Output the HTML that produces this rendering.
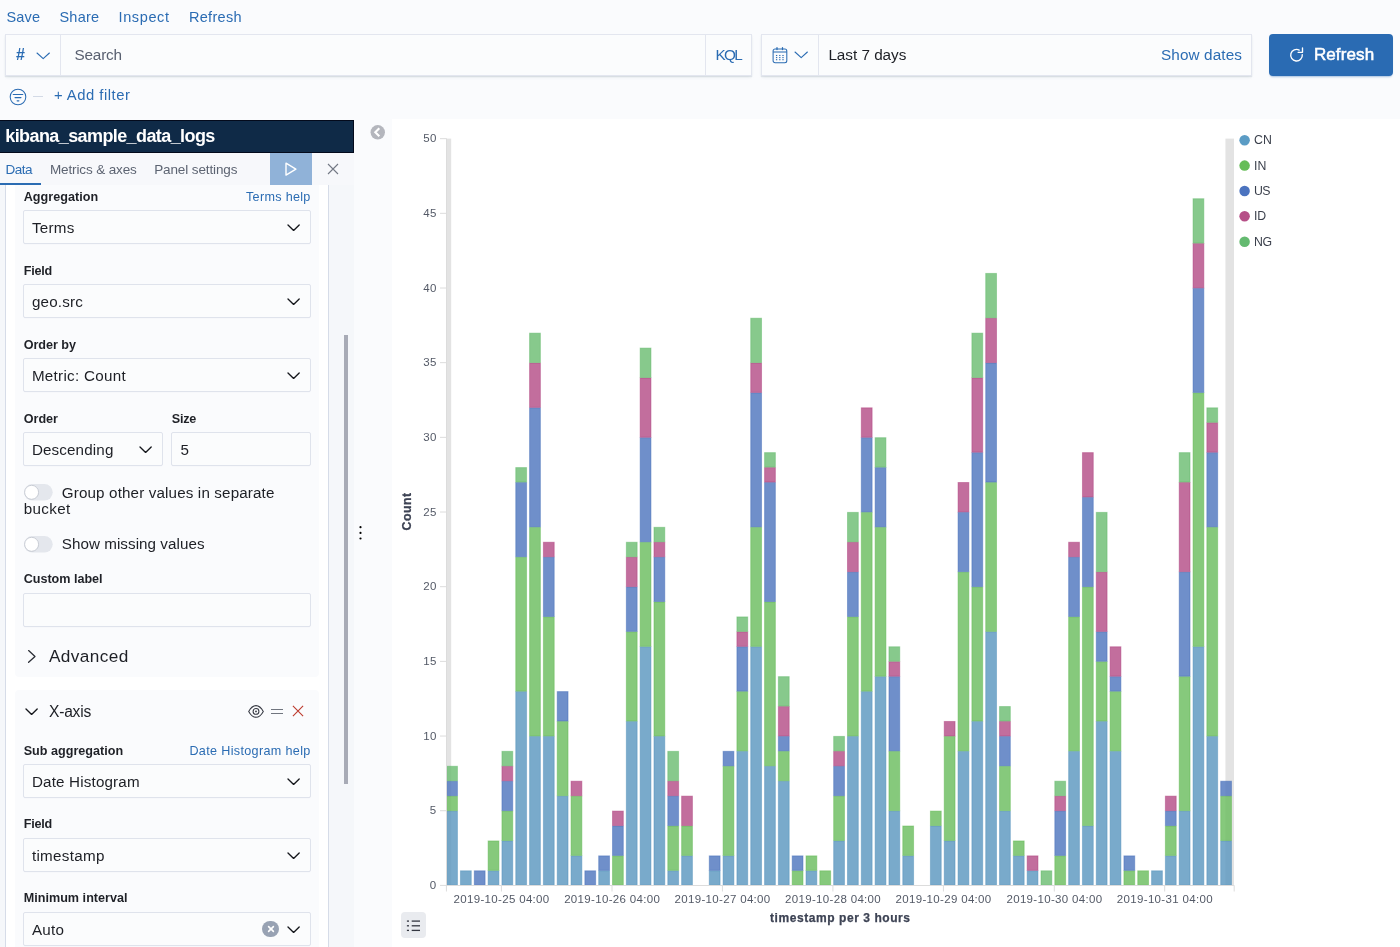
<!DOCTYPE html>
<html lang="en"><head><meta charset="utf-8"><title>Visualize - Kibana</title>
<style>
html,body{margin:0;padding:0}
body{width:1400px;height:947px;overflow:hidden;position:relative;background:#fafbfd;font-family:"Liberation Sans",sans-serif;}
.b{position:absolute;display:block}
.bb{box-sizing:border-box}
.t{position:absolute;white-space:nowrap;line-height:normal}
</style></head><body>
<div id="app" style="position:absolute;left:0;top:0;width:1400px;height:947px;will-change:transform">
<span class="t" style="left:6.50px;top:9.00px;font-size:14.5px;color:#2b6cb3;letter-spacing:0.150px;">Save</span>
<span class="t" style="left:59.50px;top:9.00px;font-size:14.5px;color:#2b6cb3;letter-spacing:0.202px;">Share</span>
<span class="t" style="left:118.50px;top:9.00px;font-size:14.5px;color:#2b6cb3;letter-spacing:0.625px;">Inspect</span>
<span class="t" style="left:189.00px;top:9.00px;font-size:14.5px;color:#2b6cb3;letter-spacing:0.288px;">Refresh</span>
<div class="b bb" style="left:5px;top:34px;width:747.4px;height:41.5px;background:#fbfcfd;border:1px solid #e3e6ef;box-shadow:0 1px 1px rgba(152,162,179,.22),0 2px 3px -1px rgba(152,162,179,.22);"></div>
<div class="b " style="left:60px;top:35px;width:1px;height:39.5px;background:#e3e6ef;"></div>
<div class="b " style="left:705px;top:35px;width:1px;height:39.5px;background:#e3e6ef;"></div>
<span class="t" style="left:15.90px;top:46.00px;font-size:16px;color:#2b6cb3;letter-spacing:0.000px;font-weight:700;">#</span>
<svg class="b" style="left:35.199999999999996px;top:50.55px;" width="16.4" height="9.7" viewBox="0 0 16.4 9.7"><path d="M2 2 L8.20 7.70 L14.40 2" fill="none" stroke="#2b6cb3" stroke-width="1.1" stroke-linecap="round" stroke-linejoin="round"/></svg>
<span class="t" style="left:74.50px;top:46.00px;font-size:15.3px;color:#596070;letter-spacing:-0.175px;">Search</span>
<span class="t" style="left:715.50px;top:46.00px;font-size:15.3px;color:#2b6cb3;letter-spacing:-1.707px;">KQL</span>
<div class="b bb" style="left:761px;top:34px;width:491px;height:41.5px;background:#fbfcfd;border:1px solid #e3e6ef;box-shadow:0 1px 1px rgba(152,162,179,.22),0 2px 3px -1px rgba(152,162,179,.22);"></div>
<div class="b " style="left:818px;top:35px;width:1px;height:39.5px;background:#e3e6ef;"></div>
<svg class="b" style="left:772px;top:47px;" width="16" height="17" viewBox="0 0 16 17"><g fill="none" stroke="#2b6cb3" stroke-width="1.05"><rect x="1.1" y="2" width="13.7" height="13.8" rx="2"/><path d="M1.1 5H14.8"/><path d="M5 0.7V2.6M10.5 0.7V2.6" stroke-linecap="round" stroke-width="1.3"/></g><g fill="#2b6cb3"><rect x="3.95" y="7.95" width="1.3" height="1.1"/><rect x="3.95" y="10.05" width="1.3" height="1.1"/><rect x="3.95" y="12.15" width="1.3" height="1.1"/><rect x="7.15" y="7.95" width="1.3" height="1.1"/><rect x="7.15" y="10.05" width="1.3" height="1.1"/><rect x="7.15" y="12.15" width="1.3" height="1.1"/><rect x="10.35" y="7.95" width="1.3" height="1.1"/><rect x="10.35" y="10.05" width="1.3" height="1.1"/><rect x="10.35" y="12.15" width="1.3" height="1.1"/></g></svg>
<svg class="b" style="left:793.3px;top:50.05px;" width="16.4" height="9.7" viewBox="0 0 16.4 9.7"><path d="M2 2 L8.20 7.70 L14.40 2" fill="none" stroke="#2b6cb3" stroke-width="1.1" stroke-linecap="round" stroke-linejoin="round"/></svg>
<span class="t" style="left:828.40px;top:46.00px;font-size:15.3px;color:#1d1f25;letter-spacing:-0.025px;">Last 7 days</span>
<span class="t" style="left:1161.00px;top:46.00px;font-size:15.3px;color:#2b6cb3;letter-spacing:0.117px;">Show dates</span>
<div class="b " style="left:1269.3px;top:33.9px;width:123.90000000000009px;height:42.00000000000001px;background:#2a6bb3;border-radius:4px;box-shadow:0 2px 2px -1px rgba(42,107,179,.4);"></div>
<svg class="b" style="left:1288px;top:46px;" width="18" height="18" viewBox="0 0 18 18"><g fill="none" stroke="#fff" stroke-width="1.35" stroke-linecap="round" stroke-linejoin="round"><path d="M11.22 4.08 A5.8 5.8 0 1 0 14.27 8.59"/><path d="M14.5 1.9 V6.3 H10.1"/></g></svg>
<span class="t" style="left:1313.90px;top:45.00px;font-size:17px;color:#fff;letter-spacing:0.113px;-webkit-text-stroke:0.55px #fff;">Refresh</span>
<svg class="b" style="left:8.9px;top:88.1px;" width="18" height="18" viewBox="0 0 18 18"><g fill="none" stroke="#2b6cb3" stroke-width="1.05" stroke-linecap="round"><circle cx="9" cy="9" r="7.8"/><path d="M4.2 6.4H13.8M6 9.6H12"/><path d="M8.2 12.8H9.8" stroke-width="1.3"/></g></svg>
<div class="b " style="left:33px;top:96px;width:10.399999999999999px;height:1px;background:#d3dae6;"></div>
<span class="t" style="left:53.90px;top:87.00px;font-size:14.8px;color:#2b6cb3;letter-spacing:0.514px;">+ Add filter</span>
<div class="b " style="left:0px;top:153px;width:354px;height:794px;background:#f5f7fa;"></div>
<div class="b bb" style="left:5px;top:185px;width:324px;height:762px;background:#fff;border-left:1px solid #d6dce8;border-right:1px solid #d6dce8;"></div>
<div class="b " style="left:15px;top:185px;width:304px;height:492.20000000000005px;background:#fafbfd;border-radius:0 0 4px 4px;"></div>
<div class="b " style="left:15px;top:690.3px;width:304px;height:256.70000000000005px;background:#fafbfd;border-radius:4px 4px 0 0;"></div>
<div class="b bb" style="left:0px;top:120px;width:354px;height:33px;background:#0f2a47;border:1px solid #030a1c;border-left:0;"></div>
<span class="t" style="left:5.30px;top:126.00px;font-size:18px;color:#fff;letter-spacing:-0.596px;font-weight:700;">kibana_sample_data_logs</span>
<div class="b " style="left:0px;top:152.7px;width:354px;height:32.30000000000001px;background:#f7f8fb;"></div>
<span class="t" style="left:5.40px;top:162.00px;font-size:13.5px;color:#2b6cb3;letter-spacing:-0.439px;">Data</span>
<div class="b " style="left:0px;top:183px;width:41px;height:2px;background:#2b6cb3;"></div>
<span class="t" style="left:50.00px;top:162.00px;font-size:13.5px;color:#5d6472;letter-spacing:-0.132px;">Metrics &amp; axes</span>
<span class="t" style="left:154.20px;top:162.00px;font-size:13.5px;color:#5d6472;letter-spacing:-0.116px;">Panel settings</span>
<div class="b " style="left:270px;top:152.7px;width:41.80000000000001px;height:32.0px;background:#90b2d8;"></div>
<svg class="b" style="left:283px;top:161px;" width="16" height="16" viewBox="0 0 16 16"><path d="M3 2.2 L12.9 8.15 L3 14.1 Z" fill="none" stroke="#fff" stroke-width="1.4" stroke-linejoin="round"/></svg>
<svg class="b" style="left:326px;top:162.2px;" width="14" height="14" viewBox="0 0 14 14"><path d="M2 2 L12 12 M12 2 L2 12" stroke="#737985" stroke-width="1.1" fill="none"/></svg>
<div class="b " style="left:344.3px;top:335px;width:3.3999999999999773px;height:448.79999999999995px;background:#a8abb6;"></div>
<span class="t" style="left:23.70px;top:190.00px;font-size:12.6px;color:#1f2127;letter-spacing:0.030px;font-weight:700;">Aggregation</span>
<span class="t" style="left:246.00px;top:190.00px;font-size:12.6px;color:#2b6cb3;letter-spacing:0.309px;">Terms help</span>
<div class="b bb" style="left:23px;top:210px;width:288px;height:34px;background:#fbfcfd;border:1px solid #dfe3ec;border-radius:2px;box-shadow:0 1px 1px -1px rgba(152,162,179,.3);"></div>
<span class="t" style="left:31.90px;top:219.00px;font-size:15.2px;color:#1d1f25;letter-spacing:0.281px;">Terms</span>
<svg class="b" style="left:286.29999999999995px;top:222.8px;" width="15.2" height="9.4" viewBox="0 0 15.2 9.4"><path d="M2 2 L7.60 7.40 L13.20 2" fill="none" stroke="#15171c" stroke-width="1.35" stroke-linecap="round" stroke-linejoin="round"/></svg>
<span class="t" style="left:23.70px;top:264.00px;font-size:12.6px;color:#1f2127;letter-spacing:-0.201px;font-weight:700;">Field</span>
<div class="b bb" style="left:23px;top:284px;width:288px;height:34px;background:#fbfcfd;border:1px solid #dfe3ec;border-radius:2px;box-shadow:0 1px 1px -1px rgba(152,162,179,.3);"></div>
<span class="t" style="left:31.90px;top:293.00px;font-size:15.2px;color:#1d1f25;letter-spacing:0.209px;">geo.src</span>
<svg class="b" style="left:286.29999999999995px;top:296.8px;" width="15.2" height="9.4" viewBox="0 0 15.2 9.4"><path d="M2 2 L7.60 7.40 L13.20 2" fill="none" stroke="#15171c" stroke-width="1.35" stroke-linecap="round" stroke-linejoin="round"/></svg>
<span class="t" style="left:23.70px;top:338.00px;font-size:12.6px;color:#1f2127;letter-spacing:-0.031px;font-weight:700;">Order by</span>
<div class="b bb" style="left:23px;top:358px;width:288px;height:34px;background:#fbfcfd;border:1px solid #dfe3ec;border-radius:2px;box-shadow:0 1px 1px -1px rgba(152,162,179,.3);"></div>
<span class="t" style="left:31.90px;top:367.00px;font-size:15.2px;color:#1d1f25;letter-spacing:0.285px;">Metric: Count</span>
<svg class="b" style="left:286.29999999999995px;top:370.8px;" width="15.2" height="9.4" viewBox="0 0 15.2 9.4"><path d="M2 2 L7.60 7.40 L13.20 2" fill="none" stroke="#15171c" stroke-width="1.35" stroke-linecap="round" stroke-linejoin="round"/></svg>
<span class="t" style="left:23.70px;top:412.00px;font-size:12.6px;color:#1f2127;letter-spacing:-0.003px;font-weight:700;">Order</span>
<span class="t" style="left:171.70px;top:412.00px;font-size:12.6px;color:#1f2127;letter-spacing:-0.171px;font-weight:700;">Size</span>
<div class="b bb" style="left:23px;top:432px;width:140px;height:34px;background:#fbfcfd;border:1px solid #dfe3ec;border-radius:2px;box-shadow:0 1px 1px -1px rgba(152,162,179,.3);"></div>
<span class="t" style="left:31.90px;top:441.00px;font-size:15.2px;color:#1d1f25;letter-spacing:0.136px;">Descending</span>
<svg class="b" style="left:138.4px;top:444.8px;" width="15.2" height="9.4" viewBox="0 0 15.2 9.4"><path d="M2 2 L7.60 7.40 L13.20 2" fill="none" stroke="#15171c" stroke-width="1.35" stroke-linecap="round" stroke-linejoin="round"/></svg>
<div class="b bb" style="left:171px;top:432px;width:140px;height:34px;background:#fbfcfd;border:1px solid #dfe3ec;border-radius:2px;box-shadow:0 1px 1px -1px rgba(152,162,179,.3);"></div>
<span class="t" style="left:180.50px;top:441.00px;font-size:15.2px;color:#1d1f25;letter-spacing:0.000px;">5</span>
<svg class="b" style="left:22px;top:482px" width="34" height="21" viewBox="0 0 34 21"><rect x="2" y="2" width="28.7" height="16.6" rx="8.3" fill="#e4e7ed"/><circle cx="9.7" cy="10.5" r="7.2" fill="#000" fill-opacity="0.07"/><circle cx="9.6" cy="10.3" r="7" fill="#fff" stroke="#c5c9d3" stroke-width="0.9"/></svg>
<span class="t" style="left:61.80px;top:484.00px;font-size:15.2px;color:#1d1f25;letter-spacing:0.141px;">Group other values in separate</span>
<span class="t" style="left:23.70px;top:500.00px;font-size:15.2px;color:#1d1f25;letter-spacing:0.363px;">bucket</span>
<svg class="b" style="left:22px;top:534px" width="34" height="21" viewBox="0 0 34 21"><rect x="2" y="2" width="28.7" height="16.6" rx="8.3" fill="#e4e7ed"/><circle cx="9.7" cy="10.5" r="7.2" fill="#000" fill-opacity="0.07"/><circle cx="9.6" cy="10.3" r="7" fill="#fff" stroke="#c5c9d3" stroke-width="0.9"/></svg>
<span class="t" style="left:61.80px;top:535.00px;font-size:15.2px;color:#1d1f25;letter-spacing:0.048px;">Show missing values</span>
<span class="t" style="left:23.70px;top:572.00px;font-size:12.6px;color:#1f2127;letter-spacing:-0.019px;font-weight:700;">Custom label</span>
<div class="b bb" style="left:23px;top:593px;width:288px;height:34px;background:#fbfcfd;border:1px solid #dfe3ec;border-radius:2px;box-shadow:0 1px 1px -1px rgba(152,162,179,.3);"></div>
<svg class="b" style="left:26px;top:649px;" width="12" height="15" viewBox="0 0 12 15"><path d="M2.6 1.6 L9 7.4 L2.6 13.2" fill="none" stroke="#2a2d35" stroke-width="1.3" stroke-linecap="round" stroke-linejoin="round"/></svg>
<span class="t" style="left:49.00px;top:646.00px;font-size:17.2px;color:#1d1f25;letter-spacing:0.400px;">Advanced</span>
<svg class="b" style="left:24.1px;top:706.8px;" width="15.2" height="9.4" viewBox="0 0 15.2 9.4"><path d="M2 2 L7.60 7.40 L13.20 2" fill="none" stroke="#15171c" stroke-width="1.35" stroke-linecap="round" stroke-linejoin="round"/></svg>
<span class="t" style="left:49.00px;top:703.00px;font-size:15.6px;color:#1d1f25;letter-spacing:-0.228px;">X-axis</span>
<svg class="b" style="left:247.7px;top:704px;" width="16" height="15" viewBox="0 0 16 15"><g fill="none" stroke="#343741" stroke-width="1.05"><path d="M0.7 7.4 C3 3.2 5.6 1.6 8 1.6 C10.4 1.6 13 3.2 15.3 7.4 C13 11.6 10.4 13.2 8 13.2 C5.6 13.2 3 11.6 0.7 7.4 Z"/><circle cx="8" cy="7.4" r="2.9"/></g><circle cx="8" cy="7.4" r="0.9" fill="#343741"/></svg>
<div class="b " style="left:270.8px;top:709px;width:12.5px;height:1px;background:#70757f;"></div>
<div class="b " style="left:270.8px;top:712.5px;width:12.5px;height:1.0px;background:#70757f;"></div>
<svg class="b" style="left:291.3px;top:704.3px;" width="14" height="14" viewBox="0 0 14 14"><path d="M1.9 1.9 L12.1 12.1 M12.1 1.9 L1.9 12.1" stroke="#bd3a2e" stroke-width="1.1" fill="none"/></svg>
<span class="t" style="left:23.70px;top:744.00px;font-size:12.6px;color:#1f2127;letter-spacing:0.007px;font-weight:700;">Sub aggregation</span>
<span class="t" style="left:189.40px;top:744.00px;font-size:12.6px;color:#2b6cb3;letter-spacing:0.342px;">Date Histogram help</span>
<div class="b bb" style="left:23px;top:764px;width:288px;height:34px;background:#fbfcfd;border:1px solid #dfe3ec;border-radius:2px;box-shadow:0 1px 1px -1px rgba(152,162,179,.3);"></div>
<span class="t" style="left:31.90px;top:773.00px;font-size:15.2px;color:#1d1f25;letter-spacing:0.170px;">Date Histogram</span>
<svg class="b" style="left:286.29999999999995px;top:776.8px;" width="15.2" height="9.4" viewBox="0 0 15.2 9.4"><path d="M2 2 L7.60 7.40 L13.20 2" fill="none" stroke="#15171c" stroke-width="1.35" stroke-linecap="round" stroke-linejoin="round"/></svg>
<span class="t" style="left:23.70px;top:817.00px;font-size:12.6px;color:#1f2127;letter-spacing:-0.201px;font-weight:700;">Field</span>
<div class="b bb" style="left:23px;top:838px;width:288px;height:34px;background:#fbfcfd;border:1px solid #dfe3ec;border-radius:2px;box-shadow:0 1px 1px -1px rgba(152,162,179,.3);"></div>
<span class="t" style="left:31.90px;top:847.00px;font-size:15.2px;color:#1d1f25;letter-spacing:0.312px;">timestamp</span>
<svg class="b" style="left:286.29999999999995px;top:850.8px;" width="15.2" height="9.4" viewBox="0 0 15.2 9.4"><path d="M2 2 L7.60 7.40 L13.20 2" fill="none" stroke="#15171c" stroke-width="1.35" stroke-linecap="round" stroke-linejoin="round"/></svg>
<span class="t" style="left:23.70px;top:891.00px;font-size:12.6px;color:#1f2127;letter-spacing:0.019px;font-weight:700;">Minimum interval</span>
<div class="b bb" style="left:23px;top:912px;width:288px;height:34px;background:#fbfcfd;border:1px solid #dfe3ec;border-radius:2px;box-shadow:0 1px 1px -1px rgba(152,162,179,.3);"></div>
<span class="t" style="left:31.90px;top:921.00px;font-size:15.2px;color:#1d1f25;letter-spacing:0.277px;">Auto</span>
<svg class="b" style="left:286.29999999999995px;top:924.8px;" width="15.2" height="9.4" viewBox="0 0 15.2 9.4"><path d="M2 2 L7.60 7.40 L13.20 2" fill="none" stroke="#15171c" stroke-width="1.35" stroke-linecap="round" stroke-linejoin="round"/></svg>
<div class="b " style="left:262.2px;top:920.7px;width:16.600000000000023px;height:16.59999999999991px;background:#98a2b3;border-radius:50%;"></div>
<svg class="b" style="left:265.5px;top:924px;" width="10" height="10" viewBox="0 0 10 10"><path d="M2.6 2.6 L7.4 7.4 M7.4 2.6 L2.6 7.4" stroke="#fff" stroke-width="1.6" fill="none" stroke-linecap="round"/></svg>
<svg class="b" style="left:368px;top:123px" width="20" height="20" viewBox="368 123 20 20"><circle cx="377.75" cy="132.3" r="7.2" fill="#b4b6bd"/><path d="M379.3 128.3 L375.3 132.3 L379.3 136.3" fill="none" stroke="#fff" stroke-width="2.1" stroke-linejoin="miter"/></svg>
<svg class="b" style="left:356px;top:522px" width="10" height="22" viewBox="356 522 10 22"><circle cx="360.5" cy="527.2" r="1.1"/><circle cx="360.5" cy="532.9" r="1.1"/><circle cx="360.5" cy="538.5" r="1.1"/></svg>
<div class="b " style="left:392px;top:119px;width:1008px;height:828px;background:#fff;"></div>
<svg class="b" style="left:0;top:0" width="1400" height="947" viewBox="0 0 1400 947" font-family="Liberation Sans, sans-serif"><rect x="446" y="138.6" width="5.2" height="746.8" fill="#000" fill-opacity="0.11"/><rect x="1225.4" y="138.6" width="8.6" height="746.8" fill="#000" fill-opacity="0.11"/><rect x="446.65" y="811.08" width="10.80" height="74.22" fill="#5895be" fill-opacity="0.8" stroke="#4b8cb8" stroke-opacity="0.45" stroke-width="1"/><rect x="446.65" y="796.14" width="10.80" height="14.49" fill="#68bc5b" fill-opacity="0.8" stroke="#5ab54c" stroke-opacity="0.45" stroke-width="1"/><rect x="446.65" y="781.21" width="10.80" height="14.49" fill="#4b73bd" fill-opacity="0.8" stroke="#3d68b6" stroke-opacity="0.45" stroke-width="1"/><rect x="446.65" y="766.27" width="10.80" height="14.49" fill="#69bc6f" fill-opacity="0.8" stroke="#5bb563" stroke-opacity="0.45" stroke-width="1"/><rect x="460.47" y="870.82" width="10.80" height="14.49" fill="#5895be" fill-opacity="0.8" stroke="#4b8cb8" stroke-opacity="0.45" stroke-width="1"/><rect x="474.29" y="870.82" width="10.80" height="14.49" fill="#4b73bd" fill-opacity="0.8" stroke="#3d68b6" stroke-opacity="0.45" stroke-width="1"/><rect x="488.12" y="870.82" width="10.80" height="14.49" fill="#5895be" fill-opacity="0.8" stroke="#4b8cb8" stroke-opacity="0.45" stroke-width="1"/><rect x="488.12" y="840.95" width="10.80" height="29.42" fill="#68bc5b" fill-opacity="0.8" stroke="#5ab54c" stroke-opacity="0.45" stroke-width="1"/><rect x="501.94" y="840.95" width="10.80" height="44.35" fill="#5895be" fill-opacity="0.8" stroke="#4b8cb8" stroke-opacity="0.45" stroke-width="1"/><rect x="501.94" y="811.08" width="10.80" height="29.42" fill="#68bc5b" fill-opacity="0.8" stroke="#5ab54c" stroke-opacity="0.45" stroke-width="1"/><rect x="501.94" y="781.21" width="10.80" height="29.42" fill="#4b73bd" fill-opacity="0.8" stroke="#3d68b6" stroke-opacity="0.45" stroke-width="1"/><rect x="501.94" y="766.27" width="10.80" height="14.49" fill="#b34a84" fill-opacity="0.8" stroke="#ab3878" stroke-opacity="0.45" stroke-width="1"/><rect x="501.94" y="751.34" width="10.80" height="14.49" fill="#69bc6f" fill-opacity="0.8" stroke="#5bb563" stroke-opacity="0.45" stroke-width="1"/><rect x="515.76" y="691.60" width="10.80" height="193.71" fill="#5895be" fill-opacity="0.8" stroke="#4b8cb8" stroke-opacity="0.45" stroke-width="1"/><rect x="515.76" y="557.18" width="10.80" height="133.97" fill="#68bc5b" fill-opacity="0.8" stroke="#5ab54c" stroke-opacity="0.45" stroke-width="1"/><rect x="515.76" y="482.50" width="10.80" height="74.22" fill="#4b73bd" fill-opacity="0.8" stroke="#3d68b6" stroke-opacity="0.45" stroke-width="1"/><rect x="515.76" y="467.57" width="10.80" height="14.49" fill="#69bc6f" fill-opacity="0.8" stroke="#5bb563" stroke-opacity="0.45" stroke-width="1"/><rect x="529.58" y="736.40" width="10.80" height="148.90" fill="#5895be" fill-opacity="0.8" stroke="#4b8cb8" stroke-opacity="0.45" stroke-width="1"/><rect x="529.58" y="527.31" width="10.80" height="208.64" fill="#68bc5b" fill-opacity="0.8" stroke="#5ab54c" stroke-opacity="0.45" stroke-width="1"/><rect x="529.58" y="407.83" width="10.80" height="119.03" fill="#4b73bd" fill-opacity="0.8" stroke="#3d68b6" stroke-opacity="0.45" stroke-width="1"/><rect x="529.58" y="363.02" width="10.80" height="44.35" fill="#b34a84" fill-opacity="0.8" stroke="#ab3878" stroke-opacity="0.45" stroke-width="1"/><rect x="529.58" y="333.15" width="10.80" height="29.42" fill="#69bc6f" fill-opacity="0.8" stroke="#5bb563" stroke-opacity="0.45" stroke-width="1"/><rect x="543.40" y="736.40" width="10.80" height="148.90" fill="#5895be" fill-opacity="0.8" stroke="#4b8cb8" stroke-opacity="0.45" stroke-width="1"/><rect x="543.40" y="616.92" width="10.80" height="119.03" fill="#68bc5b" fill-opacity="0.8" stroke="#5ab54c" stroke-opacity="0.45" stroke-width="1"/><rect x="543.40" y="557.18" width="10.80" height="59.29" fill="#4b73bd" fill-opacity="0.8" stroke="#3d68b6" stroke-opacity="0.45" stroke-width="1"/><rect x="543.40" y="542.25" width="10.80" height="14.49" fill="#b34a84" fill-opacity="0.8" stroke="#ab3878" stroke-opacity="0.45" stroke-width="1"/><rect x="557.23" y="796.14" width="10.80" height="89.16" fill="#5895be" fill-opacity="0.8" stroke="#4b8cb8" stroke-opacity="0.45" stroke-width="1"/><rect x="557.23" y="721.47" width="10.80" height="74.22" fill="#68bc5b" fill-opacity="0.8" stroke="#5ab54c" stroke-opacity="0.45" stroke-width="1"/><rect x="557.23" y="691.60" width="10.80" height="29.42" fill="#4b73bd" fill-opacity="0.8" stroke="#3d68b6" stroke-opacity="0.45" stroke-width="1"/><rect x="571.05" y="855.88" width="10.80" height="29.42" fill="#5895be" fill-opacity="0.8" stroke="#4b8cb8" stroke-opacity="0.45" stroke-width="1"/><rect x="571.05" y="796.14" width="10.80" height="59.29" fill="#68bc5b" fill-opacity="0.8" stroke="#5ab54c" stroke-opacity="0.45" stroke-width="1"/><rect x="571.05" y="781.21" width="10.80" height="14.49" fill="#b34a84" fill-opacity="0.8" stroke="#ab3878" stroke-opacity="0.45" stroke-width="1"/><rect x="584.87" y="870.82" width="10.80" height="14.49" fill="#4b73bd" fill-opacity="0.8" stroke="#3d68b6" stroke-opacity="0.45" stroke-width="1"/><rect x="598.69" y="870.82" width="10.80" height="14.49" fill="#5895be" fill-opacity="0.8" stroke="#4b8cb8" stroke-opacity="0.45" stroke-width="1"/><rect x="598.69" y="855.88" width="10.80" height="14.49" fill="#4b73bd" fill-opacity="0.8" stroke="#3d68b6" stroke-opacity="0.45" stroke-width="1"/><rect x="612.51" y="855.88" width="10.80" height="29.42" fill="#68bc5b" fill-opacity="0.8" stroke="#5ab54c" stroke-opacity="0.45" stroke-width="1"/><rect x="612.51" y="826.01" width="10.80" height="29.42" fill="#4b73bd" fill-opacity="0.8" stroke="#3d68b6" stroke-opacity="0.45" stroke-width="1"/><rect x="612.51" y="811.08" width="10.80" height="14.49" fill="#b34a84" fill-opacity="0.8" stroke="#ab3878" stroke-opacity="0.45" stroke-width="1"/><rect x="626.34" y="721.47" width="10.80" height="163.84" fill="#5895be" fill-opacity="0.8" stroke="#4b8cb8" stroke-opacity="0.45" stroke-width="1"/><rect x="626.34" y="631.86" width="10.80" height="89.16" fill="#68bc5b" fill-opacity="0.8" stroke="#5ab54c" stroke-opacity="0.45" stroke-width="1"/><rect x="626.34" y="587.05" width="10.80" height="44.35" fill="#4b73bd" fill-opacity="0.8" stroke="#3d68b6" stroke-opacity="0.45" stroke-width="1"/><rect x="626.34" y="557.18" width="10.80" height="29.42" fill="#b34a84" fill-opacity="0.8" stroke="#ab3878" stroke-opacity="0.45" stroke-width="1"/><rect x="626.34" y="542.25" width="10.80" height="14.49" fill="#69bc6f" fill-opacity="0.8" stroke="#5bb563" stroke-opacity="0.45" stroke-width="1"/><rect x="640.16" y="646.79" width="10.80" height="238.51" fill="#5895be" fill-opacity="0.8" stroke="#4b8cb8" stroke-opacity="0.45" stroke-width="1"/><rect x="640.16" y="542.25" width="10.80" height="104.09" fill="#68bc5b" fill-opacity="0.8" stroke="#5ab54c" stroke-opacity="0.45" stroke-width="1"/><rect x="640.16" y="437.70" width="10.80" height="104.09" fill="#4b73bd" fill-opacity="0.8" stroke="#3d68b6" stroke-opacity="0.45" stroke-width="1"/><rect x="640.16" y="377.96" width="10.80" height="59.29" fill="#b34a84" fill-opacity="0.8" stroke="#ab3878" stroke-opacity="0.45" stroke-width="1"/><rect x="640.16" y="348.09" width="10.80" height="29.42" fill="#69bc6f" fill-opacity="0.8" stroke="#5bb563" stroke-opacity="0.45" stroke-width="1"/><rect x="653.98" y="736.40" width="10.80" height="148.90" fill="#5895be" fill-opacity="0.8" stroke="#4b8cb8" stroke-opacity="0.45" stroke-width="1"/><rect x="653.98" y="601.99" width="10.80" height="133.97" fill="#68bc5b" fill-opacity="0.8" stroke="#5ab54c" stroke-opacity="0.45" stroke-width="1"/><rect x="653.98" y="557.18" width="10.80" height="44.35" fill="#4b73bd" fill-opacity="0.8" stroke="#3d68b6" stroke-opacity="0.45" stroke-width="1"/><rect x="653.98" y="542.25" width="10.80" height="14.49" fill="#b34a84" fill-opacity="0.8" stroke="#ab3878" stroke-opacity="0.45" stroke-width="1"/><rect x="653.98" y="527.31" width="10.80" height="14.49" fill="#69bc6f" fill-opacity="0.8" stroke="#5bb563" stroke-opacity="0.45" stroke-width="1"/><rect x="667.80" y="870.82" width="10.80" height="14.49" fill="#5895be" fill-opacity="0.8" stroke="#4b8cb8" stroke-opacity="0.45" stroke-width="1"/><rect x="667.80" y="826.01" width="10.80" height="44.35" fill="#68bc5b" fill-opacity="0.8" stroke="#5ab54c" stroke-opacity="0.45" stroke-width="1"/><rect x="667.80" y="796.14" width="10.80" height="29.42" fill="#4b73bd" fill-opacity="0.8" stroke="#3d68b6" stroke-opacity="0.45" stroke-width="1"/><rect x="667.80" y="781.21" width="10.80" height="14.49" fill="#b34a84" fill-opacity="0.8" stroke="#ab3878" stroke-opacity="0.45" stroke-width="1"/><rect x="667.80" y="751.34" width="10.80" height="29.42" fill="#69bc6f" fill-opacity="0.8" stroke="#5bb563" stroke-opacity="0.45" stroke-width="1"/><rect x="681.62" y="855.88" width="10.80" height="29.42" fill="#5895be" fill-opacity="0.8" stroke="#4b8cb8" stroke-opacity="0.45" stroke-width="1"/><rect x="681.62" y="826.01" width="10.80" height="29.42" fill="#68bc5b" fill-opacity="0.8" stroke="#5ab54c" stroke-opacity="0.45" stroke-width="1"/><rect x="681.62" y="796.14" width="10.80" height="29.42" fill="#b34a84" fill-opacity="0.8" stroke="#ab3878" stroke-opacity="0.45" stroke-width="1"/><rect x="709.27" y="870.82" width="10.80" height="14.49" fill="#5895be" fill-opacity="0.8" stroke="#4b8cb8" stroke-opacity="0.45" stroke-width="1"/><rect x="709.27" y="855.88" width="10.80" height="14.49" fill="#4b73bd" fill-opacity="0.8" stroke="#3d68b6" stroke-opacity="0.45" stroke-width="1"/><rect x="723.09" y="855.88" width="10.80" height="29.42" fill="#5895be" fill-opacity="0.8" stroke="#4b8cb8" stroke-opacity="0.45" stroke-width="1"/><rect x="723.09" y="766.27" width="10.80" height="89.16" fill="#68bc5b" fill-opacity="0.8" stroke="#5ab54c" stroke-opacity="0.45" stroke-width="1"/><rect x="723.09" y="751.34" width="10.80" height="14.49" fill="#4b73bd" fill-opacity="0.8" stroke="#3d68b6" stroke-opacity="0.45" stroke-width="1"/><rect x="736.91" y="751.34" width="10.80" height="133.97" fill="#5895be" fill-opacity="0.8" stroke="#4b8cb8" stroke-opacity="0.45" stroke-width="1"/><rect x="736.91" y="691.60" width="10.80" height="59.29" fill="#68bc5b" fill-opacity="0.8" stroke="#5ab54c" stroke-opacity="0.45" stroke-width="1"/><rect x="736.91" y="646.79" width="10.80" height="44.35" fill="#4b73bd" fill-opacity="0.8" stroke="#3d68b6" stroke-opacity="0.45" stroke-width="1"/><rect x="736.91" y="631.86" width="10.80" height="14.49" fill="#b34a84" fill-opacity="0.8" stroke="#ab3878" stroke-opacity="0.45" stroke-width="1"/><rect x="736.91" y="616.92" width="10.80" height="14.49" fill="#69bc6f" fill-opacity="0.8" stroke="#5bb563" stroke-opacity="0.45" stroke-width="1"/><rect x="750.73" y="646.79" width="10.80" height="238.51" fill="#5895be" fill-opacity="0.8" stroke="#4b8cb8" stroke-opacity="0.45" stroke-width="1"/><rect x="750.73" y="527.31" width="10.80" height="119.03" fill="#68bc5b" fill-opacity="0.8" stroke="#5ab54c" stroke-opacity="0.45" stroke-width="1"/><rect x="750.73" y="392.89" width="10.80" height="133.97" fill="#4b73bd" fill-opacity="0.8" stroke="#3d68b6" stroke-opacity="0.45" stroke-width="1"/><rect x="750.73" y="363.02" width="10.80" height="29.42" fill="#b34a84" fill-opacity="0.8" stroke="#ab3878" stroke-opacity="0.45" stroke-width="1"/><rect x="750.73" y="318.22" width="10.80" height="44.35" fill="#69bc6f" fill-opacity="0.8" stroke="#5bb563" stroke-opacity="0.45" stroke-width="1"/><rect x="764.56" y="766.27" width="10.80" height="119.03" fill="#5895be" fill-opacity="0.8" stroke="#4b8cb8" stroke-opacity="0.45" stroke-width="1"/><rect x="764.56" y="601.99" width="10.80" height="163.84" fill="#68bc5b" fill-opacity="0.8" stroke="#5ab54c" stroke-opacity="0.45" stroke-width="1"/><rect x="764.56" y="482.50" width="10.80" height="119.03" fill="#4b73bd" fill-opacity="0.8" stroke="#3d68b6" stroke-opacity="0.45" stroke-width="1"/><rect x="764.56" y="467.57" width="10.80" height="14.49" fill="#b34a84" fill-opacity="0.8" stroke="#ab3878" stroke-opacity="0.45" stroke-width="1"/><rect x="764.56" y="452.63" width="10.80" height="14.49" fill="#69bc6f" fill-opacity="0.8" stroke="#5bb563" stroke-opacity="0.45" stroke-width="1"/><rect x="778.38" y="781.21" width="10.80" height="104.09" fill="#5895be" fill-opacity="0.8" stroke="#4b8cb8" stroke-opacity="0.45" stroke-width="1"/><rect x="778.38" y="751.34" width="10.80" height="29.42" fill="#68bc5b" fill-opacity="0.8" stroke="#5ab54c" stroke-opacity="0.45" stroke-width="1"/><rect x="778.38" y="736.40" width="10.80" height="14.49" fill="#4b73bd" fill-opacity="0.8" stroke="#3d68b6" stroke-opacity="0.45" stroke-width="1"/><rect x="778.38" y="706.53" width="10.80" height="29.42" fill="#b34a84" fill-opacity="0.8" stroke="#ab3878" stroke-opacity="0.45" stroke-width="1"/><rect x="778.38" y="676.66" width="10.80" height="29.42" fill="#69bc6f" fill-opacity="0.8" stroke="#5bb563" stroke-opacity="0.45" stroke-width="1"/><rect x="792.20" y="870.82" width="10.80" height="14.49" fill="#68bc5b" fill-opacity="0.8" stroke="#5ab54c" stroke-opacity="0.45" stroke-width="1"/><rect x="792.20" y="855.88" width="10.80" height="14.49" fill="#4b73bd" fill-opacity="0.8" stroke="#3d68b6" stroke-opacity="0.45" stroke-width="1"/><rect x="806.02" y="870.82" width="10.80" height="14.49" fill="#5895be" fill-opacity="0.8" stroke="#4b8cb8" stroke-opacity="0.45" stroke-width="1"/><rect x="806.02" y="855.88" width="10.80" height="14.49" fill="#68bc5b" fill-opacity="0.8" stroke="#5ab54c" stroke-opacity="0.45" stroke-width="1"/><rect x="819.84" y="870.82" width="10.80" height="14.49" fill="#68bc5b" fill-opacity="0.8" stroke="#5ab54c" stroke-opacity="0.45" stroke-width="1"/><rect x="833.67" y="840.95" width="10.80" height="44.35" fill="#5895be" fill-opacity="0.8" stroke="#4b8cb8" stroke-opacity="0.45" stroke-width="1"/><rect x="833.67" y="796.14" width="10.80" height="44.35" fill="#68bc5b" fill-opacity="0.8" stroke="#5ab54c" stroke-opacity="0.45" stroke-width="1"/><rect x="833.67" y="766.27" width="10.80" height="29.42" fill="#4b73bd" fill-opacity="0.8" stroke="#3d68b6" stroke-opacity="0.45" stroke-width="1"/><rect x="833.67" y="751.34" width="10.80" height="14.49" fill="#b34a84" fill-opacity="0.8" stroke="#ab3878" stroke-opacity="0.45" stroke-width="1"/><rect x="833.67" y="736.40" width="10.80" height="14.49" fill="#69bc6f" fill-opacity="0.8" stroke="#5bb563" stroke-opacity="0.45" stroke-width="1"/><rect x="847.49" y="736.40" width="10.80" height="148.90" fill="#5895be" fill-opacity="0.8" stroke="#4b8cb8" stroke-opacity="0.45" stroke-width="1"/><rect x="847.49" y="616.92" width="10.80" height="119.03" fill="#68bc5b" fill-opacity="0.8" stroke="#5ab54c" stroke-opacity="0.45" stroke-width="1"/><rect x="847.49" y="572.12" width="10.80" height="44.35" fill="#4b73bd" fill-opacity="0.8" stroke="#3d68b6" stroke-opacity="0.45" stroke-width="1"/><rect x="847.49" y="542.25" width="10.80" height="29.42" fill="#b34a84" fill-opacity="0.8" stroke="#ab3878" stroke-opacity="0.45" stroke-width="1"/><rect x="847.49" y="512.38" width="10.80" height="29.42" fill="#69bc6f" fill-opacity="0.8" stroke="#5bb563" stroke-opacity="0.45" stroke-width="1"/><rect x="861.31" y="691.60" width="10.80" height="193.71" fill="#5895be" fill-opacity="0.8" stroke="#4b8cb8" stroke-opacity="0.45" stroke-width="1"/><rect x="861.31" y="512.38" width="10.80" height="178.77" fill="#68bc5b" fill-opacity="0.8" stroke="#5ab54c" stroke-opacity="0.45" stroke-width="1"/><rect x="861.31" y="437.70" width="10.80" height="74.22" fill="#4b73bd" fill-opacity="0.8" stroke="#3d68b6" stroke-opacity="0.45" stroke-width="1"/><rect x="861.31" y="407.83" width="10.80" height="29.42" fill="#b34a84" fill-opacity="0.8" stroke="#ab3878" stroke-opacity="0.45" stroke-width="1"/><rect x="875.13" y="676.66" width="10.80" height="208.64" fill="#5895be" fill-opacity="0.8" stroke="#4b8cb8" stroke-opacity="0.45" stroke-width="1"/><rect x="875.13" y="527.31" width="10.80" height="148.90" fill="#68bc5b" fill-opacity="0.8" stroke="#5ab54c" stroke-opacity="0.45" stroke-width="1"/><rect x="875.13" y="467.57" width="10.80" height="59.29" fill="#4b73bd" fill-opacity="0.8" stroke="#3d68b6" stroke-opacity="0.45" stroke-width="1"/><rect x="875.13" y="437.70" width="10.80" height="29.42" fill="#69bc6f" fill-opacity="0.8" stroke="#5bb563" stroke-opacity="0.45" stroke-width="1"/><rect x="888.95" y="811.08" width="10.80" height="74.22" fill="#5895be" fill-opacity="0.8" stroke="#4b8cb8" stroke-opacity="0.45" stroke-width="1"/><rect x="888.95" y="751.34" width="10.80" height="59.29" fill="#68bc5b" fill-opacity="0.8" stroke="#5ab54c" stroke-opacity="0.45" stroke-width="1"/><rect x="888.95" y="676.66" width="10.80" height="74.22" fill="#4b73bd" fill-opacity="0.8" stroke="#3d68b6" stroke-opacity="0.45" stroke-width="1"/><rect x="888.95" y="661.73" width="10.80" height="14.49" fill="#b34a84" fill-opacity="0.8" stroke="#ab3878" stroke-opacity="0.45" stroke-width="1"/><rect x="888.95" y="646.79" width="10.80" height="14.49" fill="#69bc6f" fill-opacity="0.8" stroke="#5bb563" stroke-opacity="0.45" stroke-width="1"/><rect x="902.78" y="855.88" width="10.80" height="29.42" fill="#5895be" fill-opacity="0.8" stroke="#4b8cb8" stroke-opacity="0.45" stroke-width="1"/><rect x="902.78" y="826.01" width="10.80" height="29.42" fill="#68bc5b" fill-opacity="0.8" stroke="#5ab54c" stroke-opacity="0.45" stroke-width="1"/><rect x="930.42" y="826.01" width="10.80" height="59.29" fill="#5895be" fill-opacity="0.8" stroke="#4b8cb8" stroke-opacity="0.45" stroke-width="1"/><rect x="930.42" y="811.08" width="10.80" height="14.49" fill="#68bc5b" fill-opacity="0.8" stroke="#5ab54c" stroke-opacity="0.45" stroke-width="1"/><rect x="944.24" y="840.95" width="10.80" height="44.35" fill="#5895be" fill-opacity="0.8" stroke="#4b8cb8" stroke-opacity="0.45" stroke-width="1"/><rect x="944.24" y="736.40" width="10.80" height="104.09" fill="#68bc5b" fill-opacity="0.8" stroke="#5ab54c" stroke-opacity="0.45" stroke-width="1"/><rect x="944.24" y="721.47" width="10.80" height="14.49" fill="#b34a84" fill-opacity="0.8" stroke="#ab3878" stroke-opacity="0.45" stroke-width="1"/><rect x="958.06" y="751.34" width="10.80" height="133.97" fill="#5895be" fill-opacity="0.8" stroke="#4b8cb8" stroke-opacity="0.45" stroke-width="1"/><rect x="958.06" y="572.12" width="10.80" height="178.77" fill="#68bc5b" fill-opacity="0.8" stroke="#5ab54c" stroke-opacity="0.45" stroke-width="1"/><rect x="958.06" y="512.38" width="10.80" height="59.29" fill="#4b73bd" fill-opacity="0.8" stroke="#3d68b6" stroke-opacity="0.45" stroke-width="1"/><rect x="958.06" y="482.50" width="10.80" height="29.42" fill="#b34a84" fill-opacity="0.8" stroke="#ab3878" stroke-opacity="0.45" stroke-width="1"/><rect x="971.89" y="721.47" width="10.80" height="163.84" fill="#5895be" fill-opacity="0.8" stroke="#4b8cb8" stroke-opacity="0.45" stroke-width="1"/><rect x="971.89" y="587.05" width="10.80" height="133.97" fill="#68bc5b" fill-opacity="0.8" stroke="#5ab54c" stroke-opacity="0.45" stroke-width="1"/><rect x="971.89" y="452.63" width="10.80" height="133.97" fill="#4b73bd" fill-opacity="0.8" stroke="#3d68b6" stroke-opacity="0.45" stroke-width="1"/><rect x="971.89" y="377.96" width="10.80" height="74.22" fill="#b34a84" fill-opacity="0.8" stroke="#ab3878" stroke-opacity="0.45" stroke-width="1"/><rect x="971.89" y="333.15" width="10.80" height="44.35" fill="#69bc6f" fill-opacity="0.8" stroke="#5bb563" stroke-opacity="0.45" stroke-width="1"/><rect x="985.71" y="631.86" width="10.80" height="253.45" fill="#5895be" fill-opacity="0.8" stroke="#4b8cb8" stroke-opacity="0.45" stroke-width="1"/><rect x="985.71" y="482.50" width="10.80" height="148.90" fill="#68bc5b" fill-opacity="0.8" stroke="#5ab54c" stroke-opacity="0.45" stroke-width="1"/><rect x="985.71" y="363.02" width="10.80" height="119.03" fill="#4b73bd" fill-opacity="0.8" stroke="#3d68b6" stroke-opacity="0.45" stroke-width="1"/><rect x="985.71" y="318.22" width="10.80" height="44.35" fill="#b34a84" fill-opacity="0.8" stroke="#ab3878" stroke-opacity="0.45" stroke-width="1"/><rect x="985.71" y="273.41" width="10.80" height="44.35" fill="#69bc6f" fill-opacity="0.8" stroke="#5bb563" stroke-opacity="0.45" stroke-width="1"/><rect x="999.53" y="811.08" width="10.80" height="74.22" fill="#5895be" fill-opacity="0.8" stroke="#4b8cb8" stroke-opacity="0.45" stroke-width="1"/><rect x="999.53" y="766.27" width="10.80" height="44.35" fill="#68bc5b" fill-opacity="0.8" stroke="#5ab54c" stroke-opacity="0.45" stroke-width="1"/><rect x="999.53" y="736.40" width="10.80" height="29.42" fill="#4b73bd" fill-opacity="0.8" stroke="#3d68b6" stroke-opacity="0.45" stroke-width="1"/><rect x="999.53" y="721.47" width="10.80" height="14.49" fill="#b34a84" fill-opacity="0.8" stroke="#ab3878" stroke-opacity="0.45" stroke-width="1"/><rect x="999.53" y="706.53" width="10.80" height="14.49" fill="#69bc6f" fill-opacity="0.8" stroke="#5bb563" stroke-opacity="0.45" stroke-width="1"/><rect x="1013.35" y="855.88" width="10.80" height="29.42" fill="#5895be" fill-opacity="0.8" stroke="#4b8cb8" stroke-opacity="0.45" stroke-width="1"/><rect x="1013.35" y="840.95" width="10.80" height="14.49" fill="#68bc5b" fill-opacity="0.8" stroke="#5ab54c" stroke-opacity="0.45" stroke-width="1"/><rect x="1027.17" y="870.82" width="10.80" height="14.49" fill="#5895be" fill-opacity="0.8" stroke="#4b8cb8" stroke-opacity="0.45" stroke-width="1"/><rect x="1027.17" y="855.88" width="10.80" height="14.49" fill="#b34a84" fill-opacity="0.8" stroke="#ab3878" stroke-opacity="0.45" stroke-width="1"/><rect x="1041.00" y="870.82" width="10.80" height="14.49" fill="#69bc6f" fill-opacity="0.8" stroke="#5bb563" stroke-opacity="0.45" stroke-width="1"/><rect x="1054.82" y="855.88" width="10.80" height="29.42" fill="#68bc5b" fill-opacity="0.8" stroke="#5ab54c" stroke-opacity="0.45" stroke-width="1"/><rect x="1054.82" y="811.08" width="10.80" height="44.35" fill="#4b73bd" fill-opacity="0.8" stroke="#3d68b6" stroke-opacity="0.45" stroke-width="1"/><rect x="1054.82" y="796.14" width="10.80" height="14.49" fill="#b34a84" fill-opacity="0.8" stroke="#ab3878" stroke-opacity="0.45" stroke-width="1"/><rect x="1054.82" y="781.21" width="10.80" height="14.49" fill="#69bc6f" fill-opacity="0.8" stroke="#5bb563" stroke-opacity="0.45" stroke-width="1"/><rect x="1068.64" y="751.34" width="10.80" height="133.97" fill="#5895be" fill-opacity="0.8" stroke="#4b8cb8" stroke-opacity="0.45" stroke-width="1"/><rect x="1068.64" y="616.92" width="10.80" height="133.97" fill="#68bc5b" fill-opacity="0.8" stroke="#5ab54c" stroke-opacity="0.45" stroke-width="1"/><rect x="1068.64" y="557.18" width="10.80" height="59.29" fill="#4b73bd" fill-opacity="0.8" stroke="#3d68b6" stroke-opacity="0.45" stroke-width="1"/><rect x="1068.64" y="542.25" width="10.80" height="14.49" fill="#b34a84" fill-opacity="0.8" stroke="#ab3878" stroke-opacity="0.45" stroke-width="1"/><rect x="1082.46" y="826.01" width="10.80" height="59.29" fill="#5895be" fill-opacity="0.8" stroke="#4b8cb8" stroke-opacity="0.45" stroke-width="1"/><rect x="1082.46" y="587.05" width="10.80" height="238.51" fill="#68bc5b" fill-opacity="0.8" stroke="#5ab54c" stroke-opacity="0.45" stroke-width="1"/><rect x="1082.46" y="497.44" width="10.80" height="89.16" fill="#4b73bd" fill-opacity="0.8" stroke="#3d68b6" stroke-opacity="0.45" stroke-width="1"/><rect x="1082.46" y="452.63" width="10.80" height="44.35" fill="#b34a84" fill-opacity="0.8" stroke="#ab3878" stroke-opacity="0.45" stroke-width="1"/><rect x="1096.28" y="721.47" width="10.80" height="163.84" fill="#5895be" fill-opacity="0.8" stroke="#4b8cb8" stroke-opacity="0.45" stroke-width="1"/><rect x="1096.28" y="661.73" width="10.80" height="59.29" fill="#68bc5b" fill-opacity="0.8" stroke="#5ab54c" stroke-opacity="0.45" stroke-width="1"/><rect x="1096.28" y="631.86" width="10.80" height="29.42" fill="#4b73bd" fill-opacity="0.8" stroke="#3d68b6" stroke-opacity="0.45" stroke-width="1"/><rect x="1096.28" y="572.12" width="10.80" height="59.29" fill="#b34a84" fill-opacity="0.8" stroke="#ab3878" stroke-opacity="0.45" stroke-width="1"/><rect x="1096.28" y="512.38" width="10.80" height="59.29" fill="#69bc6f" fill-opacity="0.8" stroke="#5bb563" stroke-opacity="0.45" stroke-width="1"/><rect x="1110.11" y="751.34" width="10.80" height="133.97" fill="#5895be" fill-opacity="0.8" stroke="#4b8cb8" stroke-opacity="0.45" stroke-width="1"/><rect x="1110.11" y="691.60" width="10.80" height="59.29" fill="#68bc5b" fill-opacity="0.8" stroke="#5ab54c" stroke-opacity="0.45" stroke-width="1"/><rect x="1110.11" y="676.66" width="10.80" height="14.49" fill="#4b73bd" fill-opacity="0.8" stroke="#3d68b6" stroke-opacity="0.45" stroke-width="1"/><rect x="1110.11" y="646.79" width="10.80" height="29.42" fill="#b34a84" fill-opacity="0.8" stroke="#ab3878" stroke-opacity="0.45" stroke-width="1"/><rect x="1123.93" y="870.82" width="10.80" height="14.49" fill="#68bc5b" fill-opacity="0.8" stroke="#5ab54c" stroke-opacity="0.45" stroke-width="1"/><rect x="1123.93" y="855.88" width="10.80" height="14.49" fill="#4b73bd" fill-opacity="0.8" stroke="#3d68b6" stroke-opacity="0.45" stroke-width="1"/><rect x="1137.75" y="870.82" width="10.80" height="14.49" fill="#68bc5b" fill-opacity="0.8" stroke="#5ab54c" stroke-opacity="0.45" stroke-width="1"/><rect x="1151.57" y="870.82" width="10.80" height="14.49" fill="#5895be" fill-opacity="0.8" stroke="#4b8cb8" stroke-opacity="0.45" stroke-width="1"/><rect x="1165.39" y="855.88" width="10.80" height="29.42" fill="#5895be" fill-opacity="0.8" stroke="#4b8cb8" stroke-opacity="0.45" stroke-width="1"/><rect x="1165.39" y="826.01" width="10.80" height="29.42" fill="#68bc5b" fill-opacity="0.8" stroke="#5ab54c" stroke-opacity="0.45" stroke-width="1"/><rect x="1165.39" y="811.08" width="10.80" height="14.49" fill="#4b73bd" fill-opacity="0.8" stroke="#3d68b6" stroke-opacity="0.45" stroke-width="1"/><rect x="1165.39" y="796.14" width="10.80" height="14.49" fill="#b34a84" fill-opacity="0.8" stroke="#ab3878" stroke-opacity="0.45" stroke-width="1"/><rect x="1179.22" y="811.08" width="10.80" height="74.22" fill="#5895be" fill-opacity="0.8" stroke="#4b8cb8" stroke-opacity="0.45" stroke-width="1"/><rect x="1179.22" y="676.66" width="10.80" height="133.97" fill="#68bc5b" fill-opacity="0.8" stroke="#5ab54c" stroke-opacity="0.45" stroke-width="1"/><rect x="1179.22" y="572.12" width="10.80" height="104.09" fill="#4b73bd" fill-opacity="0.8" stroke="#3d68b6" stroke-opacity="0.45" stroke-width="1"/><rect x="1179.22" y="482.50" width="10.80" height="89.16" fill="#b34a84" fill-opacity="0.8" stroke="#ab3878" stroke-opacity="0.45" stroke-width="1"/><rect x="1179.22" y="452.63" width="10.80" height="29.42" fill="#69bc6f" fill-opacity="0.8" stroke="#5bb563" stroke-opacity="0.45" stroke-width="1"/><rect x="1193.04" y="646.79" width="10.80" height="238.51" fill="#5895be" fill-opacity="0.8" stroke="#4b8cb8" stroke-opacity="0.45" stroke-width="1"/><rect x="1193.04" y="392.89" width="10.80" height="253.45" fill="#68bc5b" fill-opacity="0.8" stroke="#5ab54c" stroke-opacity="0.45" stroke-width="1"/><rect x="1193.04" y="288.35" width="10.80" height="104.09" fill="#4b73bd" fill-opacity="0.8" stroke="#3d68b6" stroke-opacity="0.45" stroke-width="1"/><rect x="1193.04" y="243.54" width="10.80" height="44.35" fill="#b34a84" fill-opacity="0.8" stroke="#ab3878" stroke-opacity="0.45" stroke-width="1"/><rect x="1193.04" y="198.74" width="10.80" height="44.35" fill="#69bc6f" fill-opacity="0.8" stroke="#5bb563" stroke-opacity="0.45" stroke-width="1"/><rect x="1206.86" y="736.40" width="10.80" height="148.90" fill="#5895be" fill-opacity="0.8" stroke="#4b8cb8" stroke-opacity="0.45" stroke-width="1"/><rect x="1206.86" y="527.31" width="10.80" height="208.64" fill="#68bc5b" fill-opacity="0.8" stroke="#5ab54c" stroke-opacity="0.45" stroke-width="1"/><rect x="1206.86" y="452.63" width="10.80" height="74.22" fill="#4b73bd" fill-opacity="0.8" stroke="#3d68b6" stroke-opacity="0.45" stroke-width="1"/><rect x="1206.86" y="422.76" width="10.80" height="29.42" fill="#b34a84" fill-opacity="0.8" stroke="#ab3878" stroke-opacity="0.45" stroke-width="1"/><rect x="1206.86" y="407.83" width="10.80" height="14.49" fill="#69bc6f" fill-opacity="0.8" stroke="#5bb563" stroke-opacity="0.45" stroke-width="1"/><rect x="1220.68" y="840.95" width="10.80" height="44.35" fill="#5895be" fill-opacity="0.8" stroke="#4b8cb8" stroke-opacity="0.45" stroke-width="1"/><rect x="1220.68" y="796.14" width="10.80" height="44.35" fill="#68bc5b" fill-opacity="0.8" stroke="#5ab54c" stroke-opacity="0.45" stroke-width="1"/><rect x="1220.68" y="781.21" width="10.80" height="14.49" fill="#4b73bd" fill-opacity="0.8" stroke="#3d68b6" stroke-opacity="0.45" stroke-width="1"/><path d="M446.5 138.6V885.5H1234.3" fill="none" stroke="#dcdcdc" stroke-width="1"/><path d="M440 885.40H446.5" stroke="#dcdcdc" stroke-width="1"/><text x="429.80" y="889.00" font-size="11.5" fill="#535966" textLength="6.5">0</text><path d="M440 810.73H446.5" stroke="#dcdcdc" stroke-width="1"/><text x="429.80" y="814.33" font-size="11.5" fill="#535966" textLength="6.5">5</text><path d="M440 736.05H446.5" stroke="#dcdcdc" stroke-width="1"/><text x="423.30" y="739.65" font-size="11.5" fill="#535966" textLength="13.0">10</text><path d="M440 661.38H446.5" stroke="#dcdcdc" stroke-width="1"/><text x="423.30" y="664.98" font-size="11.5" fill="#535966" textLength="13.0">15</text><path d="M440 586.70H446.5" stroke="#dcdcdc" stroke-width="1"/><text x="423.30" y="590.30" font-size="11.5" fill="#535966" textLength="13.0">20</text><path d="M440 512.02H446.5" stroke="#dcdcdc" stroke-width="1"/><text x="423.30" y="515.62" font-size="11.5" fill="#535966" textLength="13.0">25</text><path d="M440 437.35H446.5" stroke="#dcdcdc" stroke-width="1"/><text x="423.30" y="440.95" font-size="11.5" fill="#535966" textLength="13.0">30</text><path d="M440 362.67H446.5" stroke="#dcdcdc" stroke-width="1"/><text x="423.30" y="366.27" font-size="11.5" fill="#535966" textLength="13.0">35</text><path d="M440 288.00H446.5" stroke="#dcdcdc" stroke-width="1"/><text x="423.30" y="291.60" font-size="11.5" fill="#535966" textLength="13.0">40</text><path d="M440 213.32H446.5" stroke="#dcdcdc" stroke-width="1"/><text x="423.30" y="216.92" font-size="11.5" fill="#535966" textLength="13.0">45</text><path d="M440 138.65H446.5" stroke="#dcdcdc" stroke-width="1"/><text x="423.30" y="142.25" font-size="11.5" fill="#535966" textLength="13.0">50</text><path d="M446.4 885.5V891.5" stroke="#dcdcdc" stroke-width="1"/><path d="M501.4 885.5V891.5" stroke="#dcdcdc" stroke-width="1"/><path d="M612.0 885.5V891.5" stroke="#dcdcdc" stroke-width="1"/><path d="M722.4 885.5V891.5" stroke="#dcdcdc" stroke-width="1"/><path d="M832.9 885.5V891.5" stroke="#dcdcdc" stroke-width="1"/><path d="M943.4 885.5V891.5" stroke="#dcdcdc" stroke-width="1"/><path d="M1054.3 885.5V891.5" stroke="#dcdcdc" stroke-width="1"/><path d="M1164.7 885.5V891.5" stroke="#dcdcdc" stroke-width="1"/><path d="M1234.2 885.5V891.5" stroke="#dcdcdc" stroke-width="1"/><text x="453.55" y="902.9" font-size="11.5" fill="#535966" textLength="95.7">2019-10-25 04:00</text><text x="564.15" y="902.9" font-size="11.5" fill="#535966" textLength="95.7">2019-10-26 04:00</text><text x="674.55" y="902.9" font-size="11.5" fill="#535966" textLength="95.7">2019-10-27 04:00</text><text x="785.05" y="902.9" font-size="11.5" fill="#535966" textLength="95.7">2019-10-28 04:00</text><text x="895.55" y="902.9" font-size="11.5" fill="#535966" textLength="95.7">2019-10-29 04:00</text><text x="1006.45" y="902.9" font-size="11.5" fill="#535966" textLength="95.7">2019-10-30 04:00</text><text x="1116.85" y="902.9" font-size="11.5" fill="#535966" textLength="95.7">2019-10-31 04:00</text><text x="770" y="922.3" font-size="12" font-weight="700" fill="#3d4354" stroke="#3d4354" stroke-width="0.25" textLength="140">timestamp per 3 hours</text><text transform="translate(410.9,530.4) rotate(-90)" font-size="12.3" font-weight="700" fill="#3d4354" stroke="#3d4354" stroke-width="0.25" textLength="37.6">Count</text><circle cx="1244.6" cy="140.25" r="5.25" fill="#5b9cc5"/><text x="1254" y="144.35" font-size="12.3" fill="#3a3f4b" textLength="17.9">CN</text><circle cx="1244.6" cy="165.61" r="5.25" fill="#66bd57"/><text x="1254" y="169.71" font-size="12.3" fill="#3a3f4b" textLength="12.4">IN</text><circle cx="1244.6" cy="190.97" r="5.25" fill="#4b73bf"/><text x="1254" y="195.07" font-size="12.3" fill="#3a3f4b" textLength="16.5">US</text><circle cx="1244.6" cy="216.33" r="5.25" fill="#b64f87"/><text x="1254" y="220.43" font-size="12.3" fill="#3a3f4b" textLength="12.2">ID</text><circle cx="1244.6" cy="241.69" r="5.25" fill="#64ba70"/><text x="1254" y="245.79" font-size="12.3" fill="#3a3f4b" textLength="18.0">NG</text></svg>
<div class="b " style="left:401px;top:912.3px;width:24.80000000000001px;height:25.700000000000045px;background:#e9ebef;border-radius:4px;"></div>
<svg class="b" style="left:0;top:0" width="1400" height="947" viewBox="0 0 1400 947"><rect x="406.9" y="920.45" width="2.1" height="1.3" fill="#343741"/><rect x="411.7" y="920.45" width="8.3" height="1.3" fill="#343741"/><rect x="406.9" y="925.15" width="2.1" height="1.3" fill="#343741"/><rect x="411.7" y="925.15" width="8.3" height="1.3" fill="#343741"/><rect x="406.9" y="929.75" width="2.1" height="1.3" fill="#343741"/><rect x="411.7" y="929.75" width="8.3" height="1.3" fill="#343741"/></svg>
</div></body></html>
